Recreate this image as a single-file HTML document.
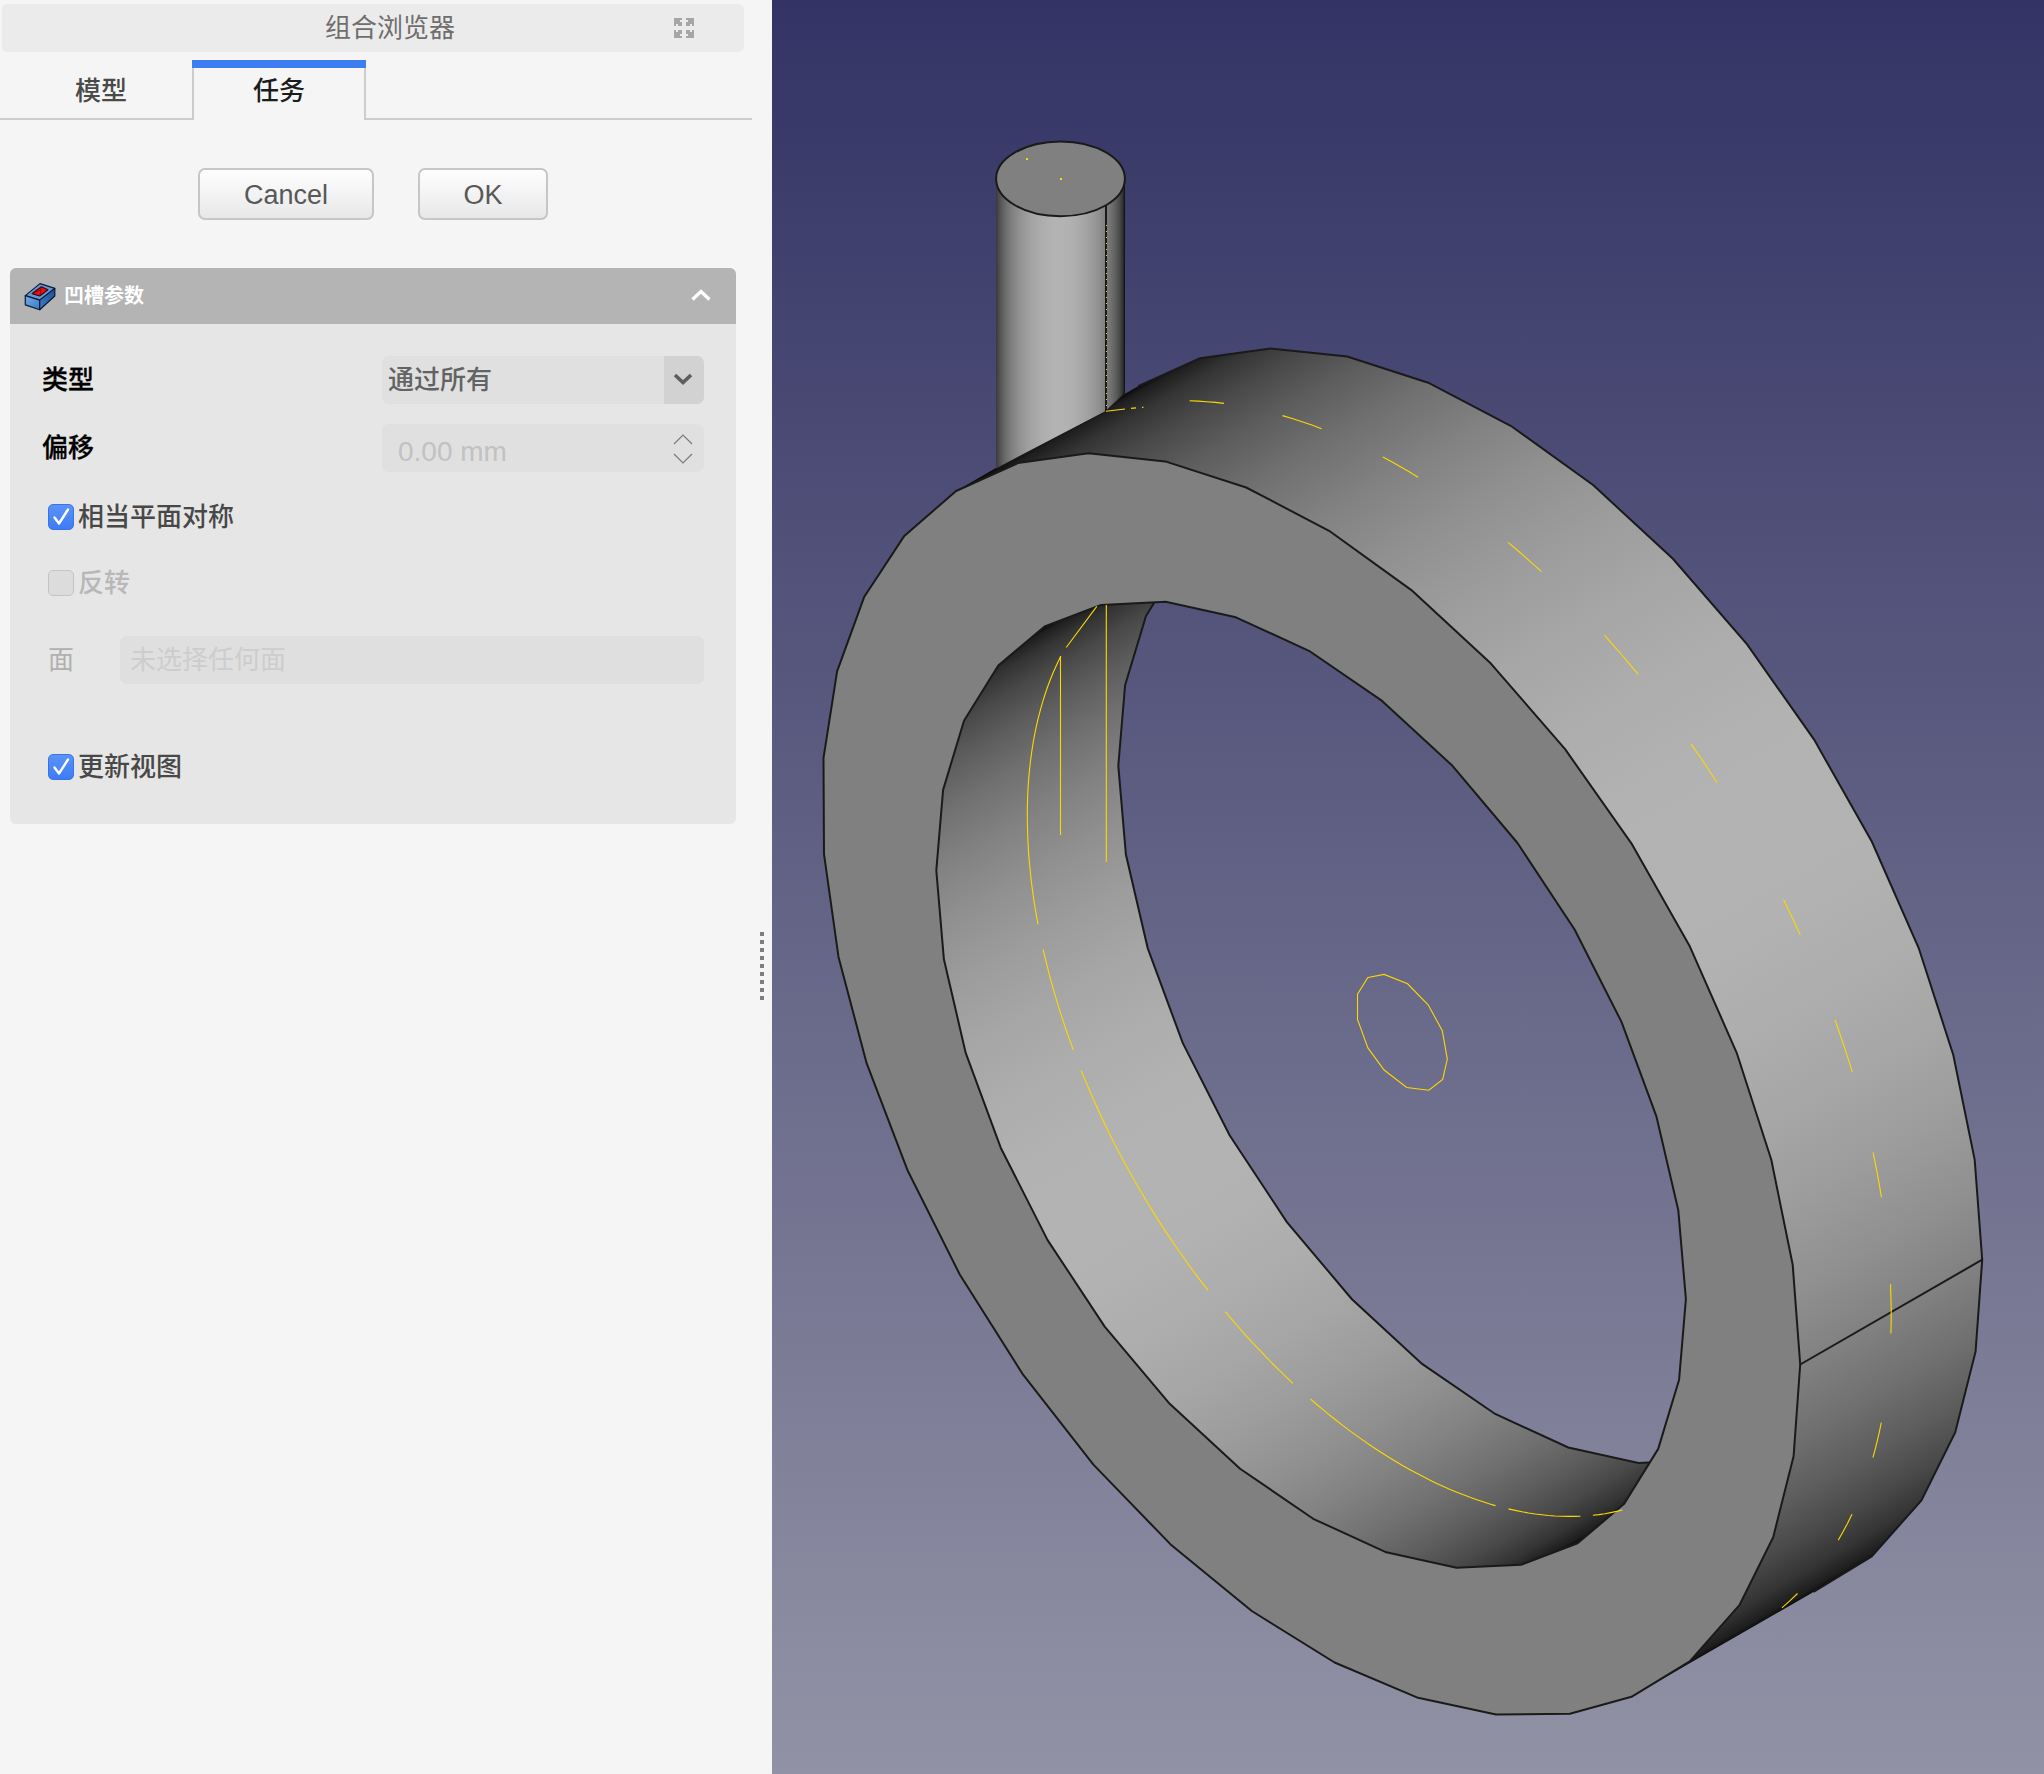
<!DOCTYPE html>
<html lang="zh-CN">
<head>
<meta charset="utf-8">
<title>组合浏览器</title>
<style>
*{box-sizing:border-box;margin:0;padding:0}
html,body{width:2044px;height:1774px;overflow:hidden;background:#f5f5f5}
body{position:relative;font-family:"Liberation Sans","Noto Sans CJK SC",sans-serif;font-size:26px;color:#333}
.abs{position:absolute}
#view{position:absolute;left:772px;top:0}
#title{left:2px;top:4px;width:742px;height:48px;background:#ebebeb;border-radius:5px;color:#6e6e6e;text-align:center;line-height:49px;font-size:26px;padding-left:34px}
#float{left:670px;top:14px}
.tabline{background:#cdcdcd}
.tab{font-weight:500;top:68px;height:51px;line-height:46px;text-align:center;font-size:26px}
.btn{top:168px;height:52px;border:2px solid #c6c6c6;border-radius:7px;background:linear-gradient(#fefefe,#e8e8e8);color:#585858;text-align:center;line-height:51px;font-size:27px}
#hdr{left:10px;top:268px;width:726px;height:56px;background:#b4b4b4;border-radius:6px 6px 0 0;color:#fff;font-weight:bold;font-size:20px;line-height:57px;padding-left:54px}
#box{left:10px;top:324px;width:726px;height:500px;background:#e6e6e6;border-radius:0 0 6px 6px}
.lbl{font-weight:500;-webkit-text-stroke:0.3px #000;color:#000;left:42px;font-size:26px;line-height:40px;height:40px}
.field{left:382px;width:322px;height:48px;background:#e0e0e0;border-radius:7px;line-height:48px;font-size:26px}
.cb{left:48px;width:26px;height:26px;border-radius:5px}
.cb.on{background:linear-gradient(#5b93f9,#3e7bf4);border:1px solid #3a73e6}
.cb.off{background:#dcdcdc;border:1px solid #c4c4c4}
.cbl{left:78px;height:40px;line-height:40px;font-size:26px;color:#484848;font-weight:500}
.dot{left:760px;width:4px;height:4px;background:#7f7f7f}
</style>
</head>
<body>
<div id="title" class="abs">组合浏览器</div>
<svg id="float" class="abs" width="28" height="28" viewBox="0 0 28 28" shape-rendering="crispEdges"><rect x="4" y="4" width="8" height="8" fill="#a6a6a6"/><rect x="10" y="6" width="2" height="2" fill="#ebebeb"/><rect x="6" y="10" width="2" height="2" fill="#ebebeb"/><rect x="16" y="4" width="8" height="8" fill="#a6a6a6"/><rect x="16" y="6" width="2" height="2" fill="#ebebeb"/><rect x="20" y="10" width="2" height="2" fill="#ebebeb"/><rect x="4" y="16" width="8" height="8" fill="#a6a6a6"/><rect x="6" y="16" width="2" height="2" fill="#ebebeb"/><rect x="10" y="20" width="2" height="2" fill="#ebebeb"/><rect x="16" y="16" width="8" height="8" fill="#a6a6a6"/><rect x="20" y="16" width="2" height="2" fill="#ebebeb"/><rect x="16" y="20" width="2" height="2" fill="#ebebeb"/></svg>

<div class="abs tabline" style="left:0;top:118px;width:193px;height:2px"></div>
<div class="abs tabline" style="left:365px;top:118px;width:387px;height:2px"></div>
<div class="abs tabline" style="left:192px;top:66px;width:2px;height:54px"></div>
<div class="abs tabline" style="left:364px;top:66px;width:2px;height:54px"></div>
<div class="abs" style="left:192px;top:60px;width:174px;height:8px;background:#3f7df2"></div>
<div class="abs tab" style="left:0;width:193px;padding-left:9px;color:#4a4a4a">模型</div>
<div class="abs tab" style="left:193px;width:172px;color:#1c1c1c">任务</div>

<div class="abs btn" style="left:198px;width:176px">Cancel</div>
<div class="abs btn" style="left:418px;width:130px">OK</div>

<div id="hdr" class="abs">凹槽参数</div>
<svg class="abs" style="left:24px;top:282px" width="32" height="30" viewBox="0 0 32 30">
<defs><linearGradient id="il" x1="0" y1="0" x2="1" y2="1"><stop offset="0" stop-color="#74aee8"/><stop offset="1" stop-color="#3a78c2"/></linearGradient>
<linearGradient id="ir" x1="0" y1="1" x2="1" y2="0"><stop offset="0" stop-color="#3d7cc6"/><stop offset="1" stop-color="#1d4f94"/></linearGradient></defs>
<path d="M1.3,13.6 L16,1.6 L30.8,6.4 L15.7,18.1 Z" fill="#5f9bdc" stroke="#0b1a33" stroke-width="1.2" stroke-linejoin="round"/>
<path d="M1.3,13.6 L15.7,18.1 V27.7 L1.3,22.9 Z" fill="url(#il)" stroke="#0b1a33" stroke-width="1.2" stroke-linejoin="round"/>
<path d="M15.7,18.1 L30.8,6.4 V14 L15.7,27.7 Z" fill="url(#ir)" stroke="#0b1a33" stroke-width="1.2" stroke-linejoin="round"/>
<path d="M8.2,11.6 L17.4,4.7 L23.9,7.8 L15.7,14 Z" fill="#e81414" stroke="#3a0505" stroke-width="1.2" stroke-linejoin="round"/>
<path d="M17.4,4.7 L15.9,13.8 M8.4,11.6 L17.4,7.5" stroke="#8a0808" stroke-width="0.9" fill="none"/>
</svg>
<svg class="abs" style="left:690px;top:287px" width="22" height="16" viewBox="0 0 22 16" fill="none" stroke="#fff" stroke-width="3.4"><path d="M2.5,12.5 L11,4.5 L19.5,12.5"/></svg>
<div id="box" class="abs"></div>

<div class="abs lbl" style="top:360px">类型</div>
<div class="abs field" style="top:356px;padding-left:6px;color:#636363;font-weight:500">通过所有</div>
<div class="abs" style="left:664px;top:356px;width:40px;height:48px;background:#d2d2d2;border-radius:0 7px 7px 0"></div>
<svg class="abs" style="left:672px;top:371px" width="22" height="16" viewBox="0 0 22 16" fill="none" stroke="#5e5e5e" stroke-width="3.6"><path d="M3,4 L11,11.5 L19,4"/></svg>

<div class="abs lbl" style="top:428px">偏移</div>
<div class="abs field" style="top:424px;padding-left:16px;color:#c2c2c2;font-size:28px;line-height:56px">0.00 mm</div>
<svg class="abs" style="left:672px;top:432px" width="22" height="34" viewBox="0 0 22 34" fill="none" stroke="#7a7a7a" stroke-width="1.2"><path d="M2,12 L11,3 L20,12 M2,22 L11,31 L20,22"/></svg>

<div class="abs cb on" style="top:504px"></div>
<svg class="abs" style="left:48px;top:504px" width="26" height="26" viewBox="0 0 26 26" fill="none" stroke="#fff" stroke-width="2.4" stroke-linecap="round" stroke-linejoin="round"><path d="M6.5,13.5 L11,19.5 L20,5.5"/></svg>
<div class="abs cbl" style="top:497px">相当平面对称</div>

<div class="abs cb off" style="top:570px"></div>
<div class="abs cbl" style="top:563px;color:#b8b8b8">反转</div>

<div class="abs" style="left:48px;top:640px;height:40px;line-height:40px;color:#b0b0b0;font-size:26px">面</div>
<div class="abs" style="left:120px;top:636px;width:584px;height:48px;background:#dfdfdf;border-radius:7px;line-height:49px;padding-left:10px;color:#cdcdcd;font-size:26px">未选择任何面</div>

<div class="abs cb on" style="top:754px"></div>
<svg class="abs" style="left:48px;top:754px" width="26" height="26" viewBox="0 0 26 26" fill="none" stroke="#fff" stroke-width="2.4" stroke-linecap="round" stroke-linejoin="round"><path d="M6.5,13.5 L11,19.5 L20,5.5"/></svg>
<div class="abs cbl" style="top:747px">更新视图</div>

<div class="abs dot" style="top:932px"></div><div class="abs dot" style="top:940px"></div><div class="abs dot" style="top:948px"></div><div class="abs dot" style="top:956px"></div><div class="abs dot" style="top:964px"></div><div class="abs dot" style="top:972px"></div><div class="abs dot" style="top:980px"></div><div class="abs dot" style="top:988px"></div><div class="abs dot" style="top:996px"></div>

<svg id="view" width="1272" height="1774" viewBox="772 0 1272 1774">
<defs>
<linearGradient id="bg" x1="0" y1="0" x2="0" y2="1"><stop offset="0" stop-color="#333365"/><stop offset="1" stop-color="#9292a6"/></linearGradient>
<linearGradient id="go" gradientUnits="userSpaceOnUse" x1="965.1" y1="485.5" x2="1657.1" y2="1684.1"><stop offset="0.0000" stop-color="#080808"/><stop offset="0.0043" stop-color="#1e1e1e"/><stop offset="0.0170" stop-color="#343434"/><stop offset="0.0381" stop-color="#494949"/><stop offset="0.0670" stop-color="#5d5d5d"/><stop offset="0.1033" stop-color="#707070"/><stop offset="0.1464" stop-color="#818181"/><stop offset="0.1956" stop-color="#909090"/><stop offset="0.2500" stop-color="#9c9c9c"/><stop offset="0.3087" stop-color="#a6a6a6"/><stop offset="0.3706" stop-color="#adadad"/><stop offset="0.4347" stop-color="#b2b2b2"/><stop offset="0.5000" stop-color="#b3b3b3"/><stop offset="0.5653" stop-color="#b2b2b2"/><stop offset="0.6294" stop-color="#adadad"/><stop offset="0.6913" stop-color="#a6a6a6"/><stop offset="0.7500" stop-color="#9c9c9c"/><stop offset="0.8044" stop-color="#909090"/><stop offset="0.8536" stop-color="#818181"/><stop offset="0.8967" stop-color="#707070"/><stop offset="0.9330" stop-color="#5d5d5d"/><stop offset="0.9619" stop-color="#494949"/><stop offset="0.9830" stop-color="#343434"/><stop offset="0.9957" stop-color="#1e1e1e"/><stop offset="1.0000" stop-color="#080808"/></linearGradient>
<linearGradient id="gi" gradientUnits="userSpaceOnUse" x1="1045.9" y1="625.5" x2="1576.2" y2="1544.1"><stop offset="0.0000" stop-color="#080808"/><stop offset="0.0043" stop-color="#1e1e1e"/><stop offset="0.0170" stop-color="#343434"/><stop offset="0.0381" stop-color="#494949"/><stop offset="0.0670" stop-color="#5d5d5d"/><stop offset="0.1033" stop-color="#707070"/><stop offset="0.1464" stop-color="#818181"/><stop offset="0.1956" stop-color="#909090"/><stop offset="0.2500" stop-color="#9c9c9c"/><stop offset="0.3087" stop-color="#a6a6a6"/><stop offset="0.3706" stop-color="#adadad"/><stop offset="0.4347" stop-color="#b2b2b2"/><stop offset="0.5000" stop-color="#b3b3b3"/><stop offset="0.5653" stop-color="#b2b2b2"/><stop offset="0.6294" stop-color="#adadad"/><stop offset="0.6913" stop-color="#a6a6a6"/><stop offset="0.7500" stop-color="#9c9c9c"/><stop offset="0.8044" stop-color="#909090"/><stop offset="0.8536" stop-color="#818181"/><stop offset="0.8967" stop-color="#707070"/><stop offset="0.9330" stop-color="#5d5d5d"/><stop offset="0.9619" stop-color="#494949"/><stop offset="0.9830" stop-color="#343434"/><stop offset="0.9957" stop-color="#1e1e1e"/><stop offset="1.0000" stop-color="#080808"/></linearGradient>
<linearGradient id="gc" gradientUnits="userSpaceOnUse" x1="993.3" y1="0.0" x2="1124.7" y2="0.0"><stop offset="0.0000" stop-color="#080808"/><stop offset="0.0043" stop-color="#1e1e1e"/><stop offset="0.0170" stop-color="#343434"/><stop offset="0.0381" stop-color="#494949"/><stop offset="0.0670" stop-color="#5d5d5d"/><stop offset="0.1033" stop-color="#707070"/><stop offset="0.1464" stop-color="#818181"/><stop offset="0.1956" stop-color="#909090"/><stop offset="0.2500" stop-color="#9c9c9c"/><stop offset="0.3087" stop-color="#a6a6a6"/><stop offset="0.3706" stop-color="#adadad"/><stop offset="0.4347" stop-color="#b2b2b2"/><stop offset="0.5000" stop-color="#b3b3b3"/><stop offset="0.5653" stop-color="#b2b2b2"/><stop offset="0.6294" stop-color="#adadad"/><stop offset="0.6913" stop-color="#a6a6a6"/><stop offset="0.7500" stop-color="#9c9c9c"/><stop offset="0.8044" stop-color="#909090"/><stop offset="0.8536" stop-color="#818181"/><stop offset="0.8967" stop-color="#707070"/><stop offset="0.9330" stop-color="#5d5d5d"/><stop offset="0.9619" stop-color="#494949"/><stop offset="0.9830" stop-color="#343434"/><stop offset="0.9957" stop-color="#1e1e1e"/><stop offset="1.0000" stop-color="#080808"/></linearGradient>
<clipPath id="hole"><polygon points="1685.9,1299.1 1678.3,1210.3 1656.5,1116.7 1621.5,1021.9 1574.6,929.5 1517.5,843.0 1452.5,765.8 1382.1,700.9 1309.0,650.8 1235.9,617.3 1165.7,601.8 1101.1,604.9 1044.6,626.4 998.3,665.5 964.0,720.7 943.1,789.9 936.3,870.5 943.9,959.3 965.7,1052.9 1000.7,1147.7 1047.6,1240.1 1104.7,1326.6 1169.7,1403.8 1240.1,1468.7 1313.2,1518.8 1386.3,1552.3 1456.5,1567.8 1521.1,1564.7 1577.6,1543.2 1623.9,1504.1 1658.2,1448.9 1679.1,1379.7"/></clipPath>
</defs>
<rect x="772" y="0" width="1272" height="1774" fill="url(#bg)"/>
<polygon points="1631.5,1696.8 1689.7,1661.3 1739.4,1605.2 1773.2,1537.2 1793.6,1456.2 1800.2,1364.5 1792.7,1264.7 1771.3,1159.8 1736.7,1052.8 1689.9,946.6 1632.1,844.4 1565.1,749.2 1490.9,663.6 1411.4,590.1 1329.1,530.8 1246.2,487.5 1165.2,461.4 1088.4,453.2 1018.0,463.1 956.1,491.0 1138.1,386.2 1200.0,358.3 1270.4,348.4 1347.2,356.6 1428.2,382.7 1511.1,426.0 1593.4,485.3 1672.9,558.8 1747.1,644.4 1814.1,739.6 1871.9,841.8 1918.7,948.0 1953.3,1055.0 1974.7,1159.9 1982.2,1259.7 1975.6,1351.4 1955.2,1432.4 1921.4,1500.4 1871.7,1556.5 1813.5,1592.0" fill="url(#go)"/>
<polyline points="1813.5,1592.0 1871.7,1556.5 1921.4,1500.4 1955.2,1432.4 1975.6,1351.4 1982.2,1259.7 1974.7,1159.9 1953.3,1055.0 1918.7,948.0 1871.9,841.8 1814.1,739.6 1747.1,644.4 1672.9,558.8 1593.4,485.3 1511.1,426.0 1428.2,382.7 1347.2,356.6 1270.4,348.4 1200.0,358.3 1138.1,386.2" fill="none" stroke="#1a1a1a" stroke-width="2"/>
<line x1="1800.2" y1="1364.5" x2="1982.2" y2="1259.7" stroke="#1a1a1a" stroke-width="2"/>
<path d="M996.1,178.8 L996.1,469 L1106,411.5 L1124.9,393.5 L1124.9,178.8 A64.4,37.4 0 0 1 996.1,178.8 Z" fill="url(#gc)"/>
<path d="M996.1,469 L1106,411.5 L1124.9,393.5" fill="none" stroke="#1a1a1a" stroke-width="1.4"/>
<line x1="1106" y1="205" x2="1106" y2="411" stroke="#1a1a1a" stroke-width="2"/>
<line x1="1106.5" y1="225" x2="1106.5" y2="411" stroke="#ffd700" stroke-width="1" stroke-dasharray="1 5"/>
<ellipse cx="1060.5" cy="178.8" rx="64.4" ry="37.4" fill="#808080" stroke="#1a1a1a" stroke-width="2"/>
<rect x="1026" y="158" width="2" height="2" fill="#ffd700"/><rect x="1060" y="178" width="2" height="2" fill="#ffd700"/>
<path d="M1106,411.3 L1125,409 M1131,408.4 L1136,407.9 M1142,407.4 L1143.5,407.2" fill="none" stroke="#ffd700" stroke-width="1.1"/>
<g clip-path="url(#hole)">
<polygon points="1044.6,626.4 998.3,665.5 964.0,720.7 943.1,789.9 936.3,870.5 943.9,959.3 965.7,1052.9 1000.7,1147.7 1047.6,1240.1 1104.7,1326.6 1169.7,1403.8 1240.1,1468.7 1313.2,1518.8 1386.3,1552.3 1456.5,1567.8 1521.1,1564.7 1577.6,1543.2 1759.6,1438.4 1703.1,1459.9 1638.5,1463.0 1568.3,1447.5 1495.2,1414.0 1422.1,1363.9 1351.7,1299.0 1286.7,1221.8 1229.6,1135.3 1182.7,1042.9 1147.7,948.1 1125.9,854.5 1118.3,765.7 1125.1,685.1 1146.0,615.9 1180.3,560.7 1226.6,521.6" fill="url(#gi)"/>
<polyline points="1283.1,500.1 1226.6,521.6 1180.3,560.7 1146.0,615.9 1125.1,685.1 1118.3,765.7 1125.9,854.5 1147.7,948.1 1182.7,1042.9 1229.6,1135.3 1286.7,1221.8 1351.7,1299.0 1422.1,1363.9 1495.2,1414.0 1568.3,1447.5 1638.5,1463.0 1703.1,1459.9 1759.6,1438.4 1805.9,1399.3" fill="none" stroke="#1a1a1a" stroke-width="2"/>
</g>
<path d="M1800.2,1364.5 L1792.7,1264.7 L1771.3,1159.8 L1736.7,1052.8 L1689.9,946.6 L1632.1,844.4 L1565.1,749.2 L1490.9,663.6 L1411.4,590.1 L1329.1,530.8 L1246.2,487.5 L1165.2,461.4 L1088.4,453.2 L1018.0,463.1 L956.1,491.0 L904.3,535.9 L864.3,596.7 L837.1,671.4 L823.5,758.1 L824.0,854.2 L838.5,956.9 L866.6,1063.2 L907.5,1170.2 L959.9,1274.8 L1022.5,1373.8 L1093.4,1464.6 L1170.6,1544.4 L1251.8,1611.0 L1334.6,1662.5 L1416.9,1697.4 L1496.0,1714.6 L1569.9,1713.7 L1631.5,1696.8 L1689.7,1661.3 L1739.4,1605.2 L1773.2,1537.2 L1793.6,1456.2 Z M1685.9,1299.1 L1678.3,1210.3 L1656.5,1116.7 L1621.5,1021.9 L1574.6,929.5 L1517.5,843.0 L1452.5,765.8 L1382.1,700.9 L1309.0,650.8 L1235.9,617.3 L1165.7,601.8 L1101.1,604.9 L1044.6,626.4 L998.3,665.5 L964.0,720.7 L943.1,789.9 L936.3,870.5 L943.9,959.3 L965.7,1052.9 L1000.7,1147.7 L1047.6,1240.1 L1104.7,1326.6 L1169.7,1403.8 L1240.1,1468.7 L1313.2,1518.8 L1386.3,1552.3 L1456.5,1567.8 L1521.1,1564.7 L1577.6,1543.2 L1623.9,1504.1 L1658.2,1448.9 L1679.1,1379.7 Z" fill="#808080" fill-rule="evenodd" stroke="#1a1a1a" stroke-width="2" stroke-linejoin="round"/>
<polyline points="1189.6,400.8 1198.1,401.1 1206.6,401.7 1215.3,402.4 1224.0,403.4" fill="none" stroke="#ffd700" stroke-width="1.1"/>
<polyline points="1282.5,415.6 1292.2,418.5 1302.0,421.7 1311.8,425.1 1321.6,428.8" fill="none" stroke="#ffd700" stroke-width="1.1"/>
<polyline points="1382.9,457.0 1391.7,461.8 1400.5,466.7 1409.2,471.8 1418.0,477.2" fill="none" stroke="#ffd700" stroke-width="1.1"/>
<polyline points="1508.1,542.4 1516.5,549.5 1524.8,556.7 1533.1,564.1 1541.4,571.6" fill="none" stroke="#ffd700" stroke-width="1.1"/>
<polyline points="1604.4,635.2 1612.9,644.8 1621.4,654.5 1629.8,664.3 1638.1,674.3" fill="none" stroke="#ffd700" stroke-width="1.1"/>
<polyline points="1691.1,743.9 1699.9,756.7 1708.7,769.7 1717.2,782.8" fill="none" stroke="#ffd700" stroke-width="1.1"/>
<polyline points="1783.6,899.8 1789.3,911.4 1794.9,923.2 1800.3,934.9" fill="none" stroke="#ffd700" stroke-width="1.1"/>
<polyline points="1835.0,1019.9 1839.6,1033.0 1844.0,1046.1 1848.3,1059.2 1852.3,1072.2" fill="none" stroke="#ffd700" stroke-width="1.1"/>
<polyline points="1873.1,1152.5 1875.4,1163.8 1877.6,1175.1 1879.6,1186.3 1881.4,1197.5" fill="none" stroke="#ffd700" stroke-width="1.1"/>
<polyline points="1890.5,1284.3 1890.9,1296.8 1891.2,1309.2 1891.2,1321.4 1890.9,1333.6" fill="none" stroke="#ffd700" stroke-width="1.1"/>
<polyline points="1881.3,1422.7 1879.4,1431.6 1877.4,1440.4 1875.2,1449.1 1872.9,1457.6" fill="none" stroke="#ffd700" stroke-width="1.1"/>
<polyline points="1852.0,1514.2 1847.6,1523.2 1843.0,1531.8 1838.2,1540.3" fill="none" stroke="#ffd700" stroke-width="1.1"/>
<polyline points="1797.5,1593.5 1789.8,1600.9 1781.9,1607.9" fill="none" stroke="#ffd700" stroke-width="1.1"/>
<polyline points="1060.9,656.0 1058.2,661.4 1055.7,666.9 1053.2,672.5 1050.9,678.2 1048.6,684.0 1046.5,690.0 1044.5,696.0 1042.6,702.2 1040.8,708.4 1039.1,714.8 1037.5,721.2 1036.0,727.8 1034.7,734.4 1033.4,741.2 1032.3,748.0 1031.3,754.9 1030.4,761.9 1029.6,769.0 1028.9,776.1 1028.4,783.3 1027.9,790.7 1027.6,798.0 1027.4,805.5 1027.3,813.0 1027.3,820.6 1027.5,828.3 1027.7,836.0 1028.1,843.8 1028.5,851.6 1029.1,859.5 1029.9,867.5 1030.7,875.5 1031.6,883.5 1032.7,891.6 1033.8,899.8 1035.1,907.9 1036.5,916.2 1038.0,924.4" fill="none" stroke="#ffd700" stroke-width="1.1"/>
<polyline points="1043.2,949.6 1045.3,958.6 1047.6,967.7 1049.9,976.8 1052.4,985.9 1055.1,995.1 1057.8,1004.2 1060.7,1013.4 1063.7,1022.6 1066.8,1031.7 1070.0,1040.9 1073.4,1050.1" fill="none" stroke="#ffd700" stroke-width="1.1"/>
<polyline points="1081.1,1070.2 1084.7,1078.9 1088.3,1087.5 1092.0,1096.1 1095.8,1104.7 1099.7,1113.2 1103.7,1121.7 1107.8,1130.2 1112.0,1138.7 1116.3,1147.2 1120.7,1155.6 1125.2,1163.9 1129.8,1172.2 1134.4,1180.5 1139.2,1188.7 1144.0,1196.9 1148.9,1205.0 1153.9,1213.1 1159.0,1221.1 1164.1,1229.1 1169.3,1236.9 1174.6,1244.8 1180.0,1252.5 1185.4,1260.2 1190.9,1267.8 1196.5,1275.3 1202.2,1282.8 1207.9,1290.2" fill="none" stroke="#ffd700" stroke-width="1.1"/>
<polyline points="1225.2,1311.6 1231.1,1318.6 1237.1,1325.5 1243.1,1332.4 1249.2,1339.1 1255.3,1345.7 1261.5,1352.2 1267.7,1358.6 1273.9,1365.0 1280.2,1371.2 1286.6,1377.3 1292.9,1383.3" fill="none" stroke="#ffd700" stroke-width="1.1"/>
<polyline points="1310.3,1398.9 1316.8,1404.5 1323.3,1409.9 1329.8,1415.3 1336.4,1420.5 1343.0,1425.6 1349.6,1430.6 1356.2,1435.4 1362.9,1440.1 1369.5,1444.7 1376.2,1449.2 1382.9,1453.5 1389.6,1457.7 1396.2,1461.7 1402.9,1465.7 1409.6,1469.4 1416.3,1473.1 1423.0,1476.6 1429.6,1479.9 1436.3,1483.2 1442.9,1486.2 1449.6,1489.2 1456.2,1491.9 1462.8,1494.6 1469.4,1497.1 1476.0,1499.4 1482.5,1501.6 1489.0,1503.7 1495.5,1505.6" fill="none" stroke="#ffd700" stroke-width="1.1"/>
<polyline points="1508.4,1508.9 1515.2,1510.4 1522.0,1511.8 1528.7,1513.0 1535.3,1514.0 1541.9,1514.8 1548.5,1515.5 1555.0,1516.0 1561.4,1516.3 1567.8,1516.4 1574.2,1516.4 1580.4,1516.2" fill="none" stroke="#ffd700" stroke-width="1.1"/>
<polyline points="1592.9,1515.3 1598.9,1514.6 1604.9,1513.7 1610.8,1512.6 1616.6,1511.4 1622.3,1510.0" fill="none" stroke="#ffd700" stroke-width="1.1"/>
<path d="M1096.8,606.3 L1066.2,647.5 M1060.5,656 V835 M1106.3,605 V862" fill="none" stroke="#ffd700" stroke-width="1.1"/>
<polygon points="1367.9,977.5 1384.1,974.4 1407.6,983.8 1428.3,1005.0 1442.3,1030.7 1447.3,1059.1 1442.7,1079.4 1428.8,1090.3 1406.7,1087.5 1384.1,1070.0 1367.9,1047.9 1357.5,1019.5 1357.5,994.2" fill="none" stroke="#ffd700" stroke-width="1.1"/>
</svg>
</body>
</html>
